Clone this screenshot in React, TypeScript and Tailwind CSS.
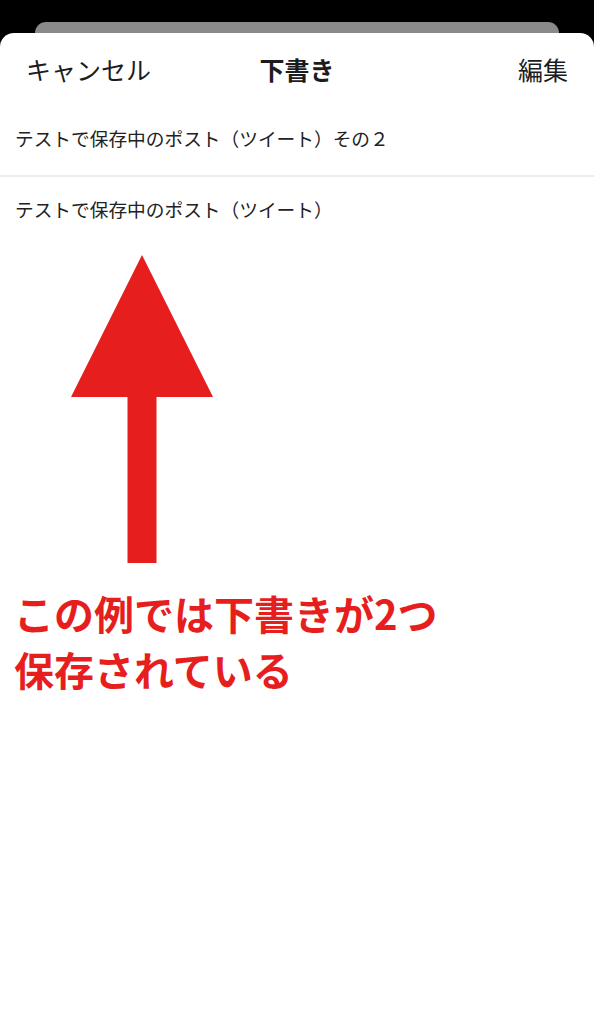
import React from 'react';

const drafts = [
  'テストで保存中のポスト（ツイート）その２',
  'テストで保存中のポスト（ツイート）',
];

const jp = { fontFamily: '"Noto Sans CJK JP", "Noto Sans", sans-serif' };

const UpArrow = () => (
  <svg width="142" height="308" viewBox="0 0 142 308" className="block">
    <polygon points="71,0 142,142 0,142" fill="#e61e1e" />
    <rect x="56.5" y="141" width="29" height="167" fill="#e61e1e" />
  </svg>
);

const App = () => {
  return (
    <div className="flex h-[1024px] flex-col bg-black pt-[22px]" style={jp}>
      {/* sheet behind */}
      <div className="mx-[35px] h-[11px] rounded-t-[14px] bg-[#8a8a8a]" />

      {/* drafts sheet */}
      <div className="flex flex-1 flex-col rounded-t-[14px] bg-white">
        <div className="grid h-[76px] grid-cols-3 items-center pb-[2px] pl-[26px] pr-[26px] text-[25px] text-[#1c1c1e]">
          <span>キャンセル</span>
          <span className="text-center font-bold">下書き</span>
          <span className="text-right">編集</span>
        </div>

        {drafts.map((text, i) => (
          <div key={i}>
            <div className={`flex items-center px-[15px] text-[18.7px] text-[#222] ${i === 0 ? 'h-[66px] pb-[8px]' : 'h-[68px] pb-[4px]'}`}>
              {text}
            </div>
            {i === 0 && <div className="h-[2px] bg-[#eeeaed]" />}
          </div>
        ))}

        <div className="ml-[71px] mt-[10px]">
          <UpArrow />
        </div>

        <div className="ml-[14px] mt-[22px] text-[40px] font-bold leading-[56px] text-[#e61e1e]">
          <div>この例では下書きが2つ</div>
          <div>保存されている</div>
        </div>
      </div>
    </div>
  );
};

export default App;
